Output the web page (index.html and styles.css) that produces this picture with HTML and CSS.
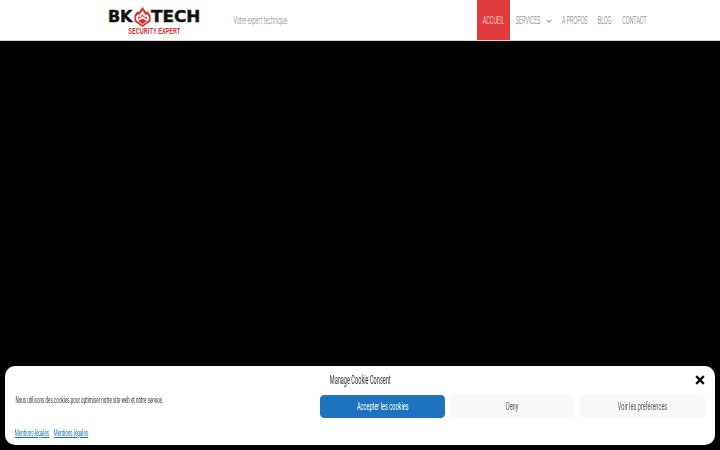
FILE: index.html
```html
<!DOCTYPE html>
<html lang="fr">
<head>
<meta charset="utf-8">
<title>BK TECH</title>
<link rel="stylesheet" href="styles.css">
</head>
<body>
<header class="site-header">
  <a class="logo" href="#">
    <span class="logo-main">
      <span class="logo-word logo-bk">BK</span>
      <svg class="logo-flame" viewBox="0 0 18 21" width="17" height="20">
        <path d="M9 0 L13 5.5 L14.5 4.5 L17.5 9 V15 L9 21 L.5 15 V9 L3.5 4.5 L5 5.5 Z" fill="#e2262c"/>
        <path d="M9 3.5 L12.2 8.5 L14 7.5 L15.7 10 V14 L9 19 L2.3 14 V10 L4 7.5 L5.8 8.5 Z" fill="#fff"/>
        <path d="M9 7.500 L11 10.500 L12.800 10 L13.800 11.500 V13 L9 9.800 L4.200 13 V11.500 L5.200 10 L7 10.500 Z" fill="#e2262c"/>
        <path d="M9 12 L13.500 14.800 L9 18 L4.500 14.800 Z" fill="#e2262c"/>
      </svg>
      <span class="logo-word logo-tech">TECH</span>
    </span>
    <span class="logo-sub"><span class="logo-sub-text">SECURITY EXPERT</span></span>
  </a>
  <p class="tagline"><span class="narrow narrow-tag">Votre expert technique</span></p>
  <nav class="nav">
    <a class="nav-item nav-active nav-accueil" href="#"><span class="narrow">ACCUEIL</span></a>
    <a class="nav-item nav-services" href="#"><span class="narrow">SERVICES</span>
      <svg class="chev" viewBox="0 0 6 4" width="6" height="4"><path d="M.5 .7 L3 3.2 L5.5 .7" fill="none" stroke="#666" stroke-width=".8"/></svg>
    </a>
    <a class="nav-item nav-apropos" href="#"><span class="narrow">A PROPOS</span></a>
    <a class="nav-item nav-blog" href="#"><span class="narrow">BLOG</span></a>
    <a class="nav-item nav-contact" href="#"><span class="narrow">CONTACT</span></a>
  </nav>
</header>
<main class="hero"></main>
<section class="cookie">
  <div class="cookie-title"><span class="narrow narrow-title">Manage Cookie Consent</span></div>
  <button class="cookie-close" aria-label="Fermer">
    <svg viewBox="0 0 10 10" width="10" height="10"><path d="M1.2 1.2 L8.8 8.8 M8.8 1.2 L1.2 8.8" stroke="#111" stroke-width="2.4"/></svg>
  </button>
  <p class="cookie-msg"><span class="narrow narrow-msg">Nous utilisons des cookies pour optimiser notre site web et notre service.</span></p>
  <div class="cookie-buttons">
    <button class="btn btn-primary"><span class="narrow narrow-btn">Accepter les cookies</span></button>
    <button class="btn"><span class="narrow narrow-btn">Deny</span></button>
    <button class="btn"><span class="narrow narrow-btn">Voir les préférences</span></button>
  </div>
  <div class="cookie-links">
    <a href="#" class="link"><span class="narrow narrow-link">Mentions légales</span></a>
    <a href="#" class="link"><span class="narrow narrow-link">Mentions légales</span></a>
  </div>
</section>
</body>
</html>
```
FILE: styles.css
```css
* { box-sizing: border-box; }
html, body { margin: 0; height: 100%; }
body {
  width: 720px;
  height: 450px;
  overflow: hidden;
  background: #000;
  font-family: Roboto, "Liberation Sans", sans-serif;
  font-weight: 300;
  display: flex;
  flex-direction: column;
}
a { text-decoration: none; color: inherit; }

.narrow {
  display: inline-block;
  white-space: nowrap;
  transform: scaleX(.5);
  transform-origin: center;
}

.site-header {
  height: 41px;
  flex: none;
  background: #fff;
  display: flex;
  align-items: flex-start;
  padding-left: 108px;
  border-bottom: 1px solid #d8d8d8;
}

.logo {
  width: 92px;
  height: 40px;
  display: flex;
  flex-direction: column;
  padding-top: 6px;
}
.logo-main {
  display: flex;
  align-items: center;
  height: 21px;
}
.logo-word {
  font-family: "DejaVu Sans", sans-serif;
  font-weight: 700;
  font-size: 16px;
  line-height: 21px;
  color: #111;
  -webkit-text-stroke: .4px #111;
  display: block;
  transform-origin: left center;
}
.logo-bk { width: 26px; transform: scaleX(1); letter-spacing: -.3px; }
.logo-tech { width: 49px; transform: scaleX(1.05); }
.logo-flame { flex: none; }
.logo-sub {
  height: 8px;
  display: flex;
  justify-content: center;
}
.logo-sub-text {
  font-family: "Liberation Sans", sans-serif;
  font-weight: 700;
  font-size: 9px;
  line-height: 8px;
  color: #e2262c;
  white-space: nowrap;
  transform: scaleX(.6);
  display: block;
  letter-spacing: .2px;
}

.tagline {
  margin: 0 0 0 33px;
  width: 54px;
  height: 40px;
  font-size: 11px;
  line-height: 42px;
  color: #777;
  display: flex;
  justify-content: center;
}
.narrow-tag { flex: none; transform: scaleX(.495); }

.nav {
  margin-left: auto;
  margin-right: 73px;
  display: flex;
  height: 40px;
}
.nav-item {
  height: 40px;
  font-size: 11px;
  line-height: 41px;
  color: #666;
  display: flex;
  justify-content: center;
  flex: none;
}
.nav-item .narrow { flex: none; }
.nav-active { background: #e03a3c; color: #fff; }
.nav-accueil { width: 33px; }
.nav-services { width: 51px; justify-content: flex-start; padding-left: 5px; align-items: center; }
.nav-services .narrow { width: 26px; display: flex; justify-content: center; line-height: 41px; }
.nav-apropos { width: 28px; }
.nav-blog { width: 15px; margin-left: 8px; }
.nav-contact { width: 25px; margin-left: 10px; }
.chev { margin-left: 5px; margin-top: 1px; flex: none; }

.hero { flex: 1; background: #000; }

.cookie {
  position: fixed;
  left: 5px;
  top: 366px;
  width: 710px;
  height: 79px;
  background: #fff;
  border-radius: 10px;
  color: #333;
  display: grid;
  grid-template-columns: 305px 1fr;
  grid-template-rows: 29px 23px 1fr;
  padding: 0 10px;
}
.cookie-title {
  grid-column: 1 / 3;
  display: flex;
  justify-content: center;
  align-items: center;
  font-size: 12px;
  line-height: 29px;
  height: 29px;
  color: #333;
}
.narrow-title { flex: none; transform: scaleX(.467); font-weight: 400; }
.cookie-close {
  position: absolute;
  top: 9px;
  right: 10px;
  width: 10px;
  height: 10px;
  padding: 0;
  border: 0;
  background: none;
  display: flex;
}
.cookie-msg {
  margin: 0;
  grid-column: 1;
  grid-row: 2;
  width: 148px;
  display: flex;
  justify-content: center;
  font-size: 9px;
  line-height: 11px;
  color: #333;
  align-self: start;
}
.narrow-msg { flex: none; transform: scaleX(.505); font-weight: 400; }
.cookie-buttons {
  grid-column: 2;
  grid-row: 2;
  display: grid;
  grid-template-columns: repeat(3, 125px);
  gap: 5px;
}
.btn {
  height: 23px;
  border: 1px solid #f9f9f9;
  background: #f9f9f9;
  border-radius: 4px;
  font: inherit;
  font-size: 11px;
  color: #555;
  padding: 0;
  display: flex;
  align-items: center;
  justify-content: center;
}
.narrow-btn { flex: none; transform: scaleX(.51); font-weight: 400; }
.btn-primary { background: #1e73be; border-color: #1e73be; color: #fff; }
.cookie-links {
  grid-column: 1 / 3;
  grid-row: 3;
  display: flex;
  align-items: flex-start;
  padding-top: 9px;
  gap: 5px;
  font-size: 9.5px;
  line-height: 12px;
}
.link {
  color: #1e73be;
  width: 34px;
  display: flex;
  justify-content: center;
  text-decoration: underline;
}
.narrow-link { flex: none; text-decoration: underline; transform: scaleX(.476); font-weight: 400; }
```
